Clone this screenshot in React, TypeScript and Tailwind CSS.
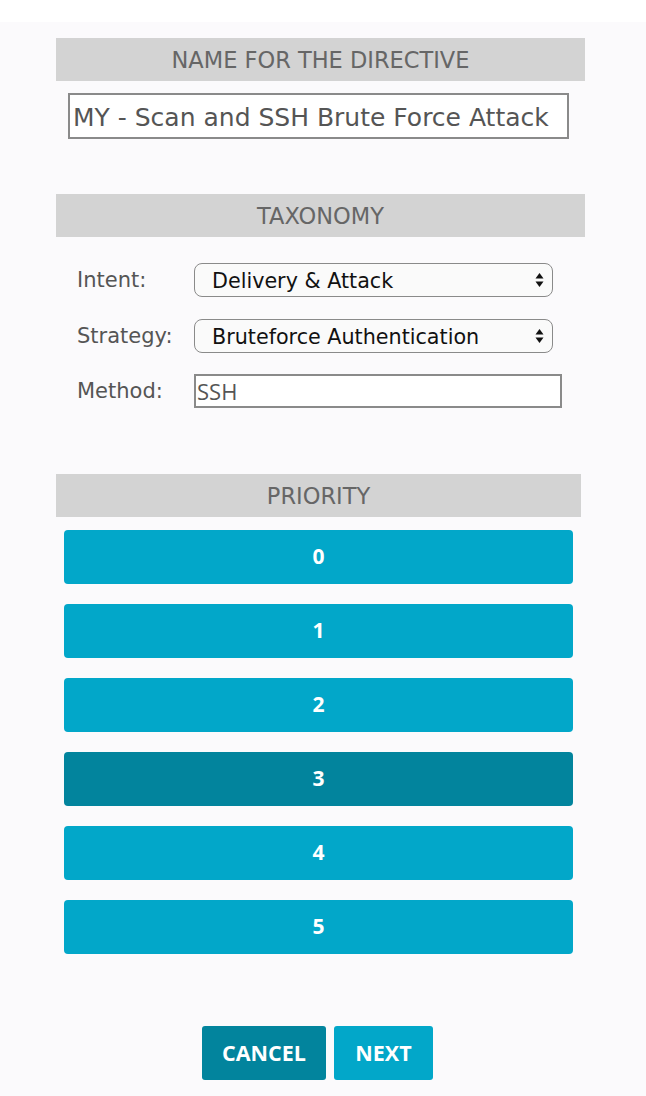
import { useState } from "react";

const priorities = [0, 1, 2, 3, 4, 5];

const SectionHeader = ({ title, wide = true }: { title: string; wide?: boolean }) => (
  <div
    className={`h-[43px] flex items-center justify-center pt-[3px] bg-[#d3d3d3] text-[#666] text-[22.5px] ${
      wide ? "w-[529px]" : "w-[525px]"
    }`}
  >
    {title}
  </div>
);

const SelectBox = ({ value }: { value: string }) => (
  <div className="w-[359px] h-[34px] flex items-center justify-between pl-[17px] pr-[8px] bg-[#fafafa] border border-[#8a8a8a] rounded-[8px] text-[20.7px] text-[#111]">
    <span className="pt-[3px]">{value}</span>
    <svg width="9" height="16" viewBox="0 0 9 16">
      <path d="M4.5 1 L8.5 6.5 H0.5 Z" fill="#111" />
      <path d="M4.5 15 L8.5 9.5 H0.5 Z" fill="#111" />
    </svg>
  </div>
);

export default function App() {
  const [selected, setSelected] = useState(3);

  return (
    <div className="min-h-[1096px] w-[646px] bg-[#fbfafc] font-['DejaVu_Sans',sans-serif]">
      <div className="h-[22px] bg-white" />
      <div className="pl-[56px] pt-[16px]">
        <SectionHeader title="NAME FOR THE DIRECTIVE" />
        <div className="mt-[12px] ml-[12px] w-[501px] h-[46px] flex items-center px-[3px] pt-[3px] bg-white border-2 border-[#8a8a8a] text-[25px] text-[#555]">
          MY - Scan and SSH Brute Force Attack
        </div>

        <div className="mt-[55px]">
          <SectionHeader title="TAXONOMY" />
        </div>
        <div className="ml-[21px] mt-[26px] flex flex-col gap-[22px] text-[21px] text-[#555]">
          <div className="flex items-center">
            <span className="w-[117px] pt-[2px]">Intent:</span>
            <SelectBox value="Delivery & Attack" />
          </div>
          <div className="flex items-center">
            <span className="w-[117px] pt-[2px]">Strategy:</span>
            <SelectBox value="Bruteforce Authentication" />
          </div>
          <div className="flex items-center -mt-[1px]">
            <span className="w-[117px] pt-[2px]">Method:</span>
            <div className="w-[368px] h-[34px] flex items-center px-[1px] pt-[1px] bg-white border-2 border-[#8a8a8a] font-['Open_Sans',sans-serif] text-[22px] text-[#555]">
              SSH
            </div>
          </div>
        </div>

        <div className="mt-[66px]">
          <SectionHeader title="PRIORITY" wide={false} />
        </div>
        <div className="ml-[8px] mt-[13px] flex flex-col gap-[20px] font-['Open_Sans',sans-serif]">
          {priorities.map((p) => (
            <button
              key={p}
              onClick={() => setSelected(p)}
              className={`w-[509px] h-[54px] rounded-[4px] text-white font-bold text-[21px] flex items-center justify-center ${
                selected === p ? "bg-[#02849d]" : "bg-[#02a7c9]"
              }`}
            >
              {p}
            </button>
          ))}
        </div>

        <div className="mt-[72px] ml-[146px] flex gap-[8px] font-['Open_Sans',sans-serif]">
          <button className="w-[124px] h-[54px] rounded-[3px] bg-[#02849d] text-white font-bold text-[21.5px]">
            CANCEL
          </button>
          <button className="w-[99px] h-[54px] rounded-[3px] bg-[#02a7c9] text-white font-bold text-[21.5px]">
            NEXT
          </button>
        </div>
      </div>
    </div>
  );
}
